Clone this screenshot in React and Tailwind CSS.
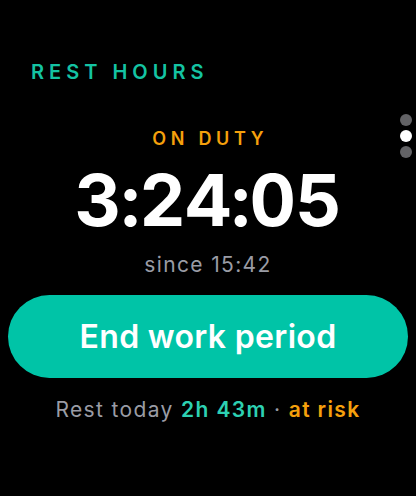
import React from "react";

export default function App() {
  return (
    <div
      className="relative h-[496px] w-[416px] overflow-hidden bg-black text-white"
      style={{ fontFamily: "Inter, 'Noto Sans', sans-serif" }}
    >
      <div className="flex flex-col pt-[60px]">
        <div className="pl-[31px] text-[20px] leading-[24px] font-semibold tracking-[0.25em] text-[#14c3a3]">
          REST HOURS
        </div>
        <div className="mt-[44px] pl-[0.26em] text-center text-[18px] leading-[22px] font-semibold tracking-[0.26em] text-[#f5a00c]">
          ON DUTY
        </div>
        <div className="mt-[14px] text-center text-[72px] leading-[72px] font-bold tracking-[-0.01em] tabular-nums">
          3:24:05
        </div>
        <div className="mt-[17px] text-center text-[21px] leading-[24px] tracking-[0.065em] text-[#9a9ca5]">
          since 15:42
        </div>
        <div className="mt-[18px] px-[8px]">
          <button className="flex h-[83px] w-full items-center justify-center rounded-full bg-[#00c4a7] text-[32px] font-semibold tracking-[0.01em] text-white">
            End work period
          </button>
        </div>
        <div className="mt-[20px] text-center text-[21px] leading-[24px] tracking-[0.065em] text-[#9a9ca5]">
          Rest today <span className="font-semibold text-[#2dd0b2]">2h 43m</span>{" "}
          · <span className="font-semibold text-[#f5a00c]">at risk</span>
        </div>
      </div>
      <div className="absolute right-[4px] top-[114px] flex flex-col gap-[4px]">
        <div className="h-[12px] w-[12px] rounded-full bg-[#636366]" />
        <div className="h-[12px] w-[12px] rounded-full bg-white" />
        <div className="h-[12px] w-[12px] rounded-full bg-[#636366]" />
      </div>
    </div>
  );
}
